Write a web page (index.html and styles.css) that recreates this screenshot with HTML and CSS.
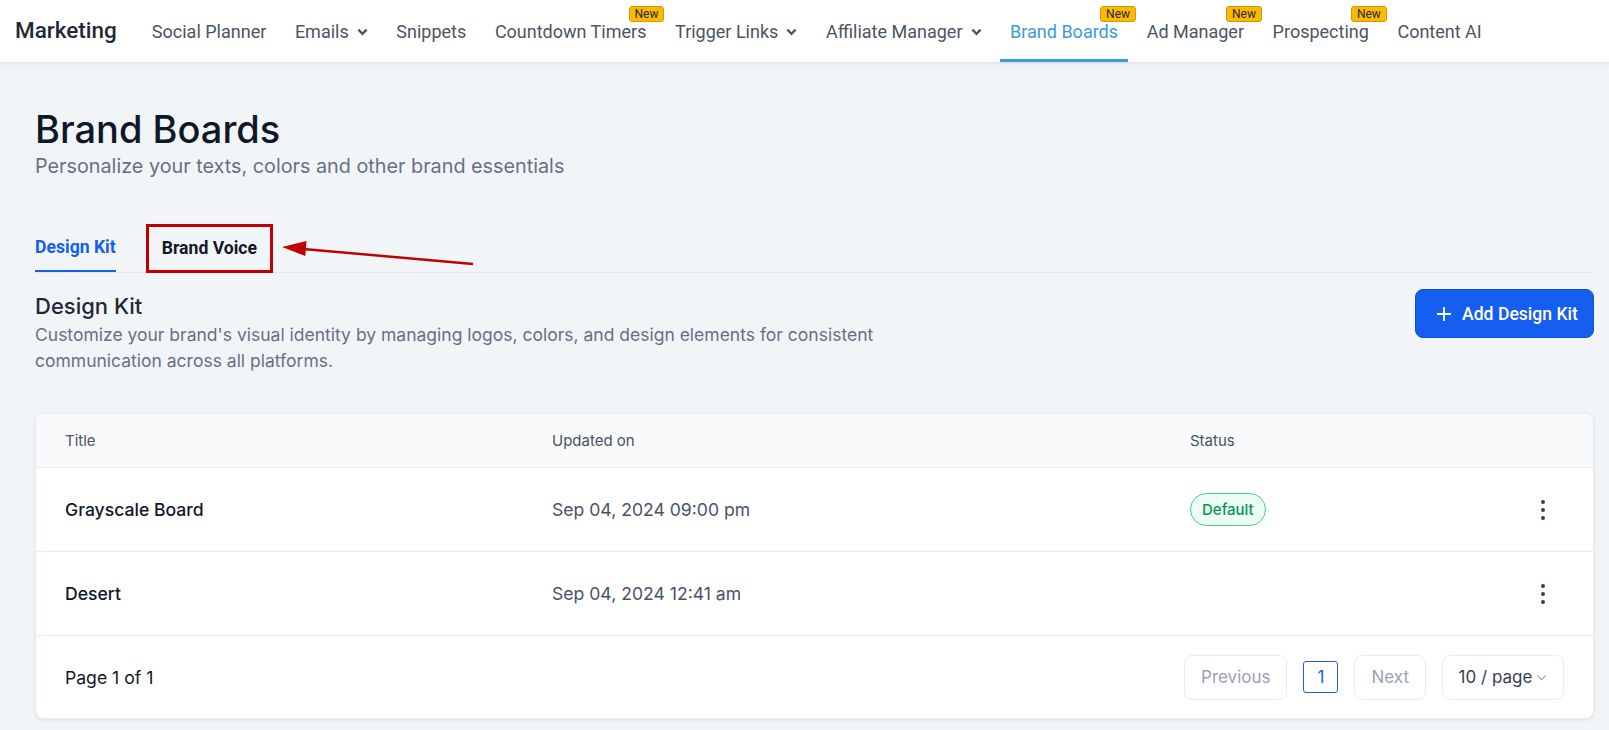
FILE: index.html
```html
<!DOCTYPE html>
<html lang="en">
<head>
<meta charset="utf-8">
<title>Brand Boards</title>
<link rel="stylesheet" href="styles.css">
</head>
<body>
<header class="topbar">
  <div class="brand">Marketing</div>
  <nav class="nav">
    <a class="nav-item">Social Planner</a>
    <a class="nav-item">Emails <svg class="chev" viewBox="0 0 12 8"><path d="M1.5 1.5 6 6l4.5-4.5"/></svg></a>
    <a class="nav-item">Snippets</a>
    <a class="nav-item">Countdown Timers<span class="new">New</span></a>
    <a class="nav-item">Trigger Links <svg class="chev" viewBox="0 0 12 8"><path d="M1.5 1.5 6 6l4.5-4.5"/></svg></a>
    <a class="nav-item">Affiliate Manager <svg class="chev" viewBox="0 0 12 8"><path d="M1.5 1.5 6 6l4.5-4.5"/></svg></a>
    <a class="nav-item active">Brand Boards<span class="new">New</span></a>
    <a class="nav-item">Ad Manager<span class="new">New</span></a>
    <a class="nav-item">Prospecting<span class="new">New</span></a>
    <a class="nav-item">Content AI</a>
  </nav>
</header>

<main class="page">
  <h1 class="title">Brand Boards</h1>
  <p class="subtitle">Personalize your texts, colors and other brand essentials</p>

  <div class="tabs">
    <div class="tab active">Design Kit</div>
    <div class="tab marked">Brand Voice</div>
    <svg class="arrow" width="450" height="50" viewBox="0 0 450 50">
      <line x1="268" y1="24.9" x2="438" y2="40" stroke="#c00000" stroke-width="2.5"/>
      <polygon points="247,23 271.5,17 270.3,32" fill="#c00000"/>
    </svg>
  </div>

  <section class="section-head">
    <div class="section-text">
      <h2 class="section-title">Design Kit</h2>
      <p class="section-desc">Customize your brand's visual identity by managing logos, colors, and design elements for consistent communication across all platforms.</p>
    </div>
    <button class="btn-primary">
      <svg class="plus" viewBox="0 0 14 14"><path d="M7 0v14M0 7h14"/></svg>
      Add Design Kit
    </button>
  </section>

  <div class="card">
    <div class="row head">
      <div>Title</div>
      <div>Updated on</div>
      <div>Status</div>
      <div></div>
    </div>
    <div class="row">
      <div class="name">Grayscale Board</div>
      <div class="date">Sep 04, 2024 09:00 pm</div>
      <div><span class="pill">Default</span></div>
      <div class="kebab"><span></span><span></span><span></span></div>
    </div>
    <div class="row">
      <div class="name">Desert</div>
      <div class="date">Sep 04, 2024 12:41 am</div>
      <div></div>
      <div class="kebab"><span></span><span></span><span></span></div>
    </div>
    <div class="footer">
      <div class="page-info">Page 1 of 1</div>
      <div class="pager">
        <button class="pg-btn">Previous</button>
        <button class="pg-num">1</button>
        <button class="pg-btn">Next</button>
        <button class="pg-size">10 / page <svg class="small-chev" viewBox="0 0 12 8"><path d="M1 1.5 6 6.5l5-5"/></svg></button>
      </div>
    </div>
  </div>
</main>
</body>
</html>
```
FILE: styles.css
```css
* { box-sizing: border-box; }
html, body { margin: 0; padding: 0; }
body {
  background: #f2f5f8;
  font-family: "Inter", "Roboto", sans-serif;
  color: #101828;
  width: 1609px;
  height: 730px;
  overflow: hidden;
}

/* Top bar */
.topbar {
  height: 62px;
  background: #ffffff;
  display: flex;
  align-items: stretch;
  padding-left: 15px;
  box-shadow: 0 1px 4px rgba(16, 24, 40, 0.12);
  position: relative;
  z-index: 2;
}
.brand {
  font-family: "Roboto", sans-serif;
  font-size: 22.5px;
  font-weight: 500;
  color: #1f2937;
  display: flex;
  align-items: center;
  margin-right: 25px;
  padding-bottom: 3px;
}
.nav {
  display: flex;
  gap: 8.6px;
  align-items: stretch;
}
.nav-item {
  font-family: "Roboto", sans-serif;
  font-size: 18px;
  color: #4b5563;
  padding: 0 10px;
  display: flex;
  align-items: center;
  gap: 8px;
  position: relative;
  border-bottom: 3px solid transparent;
  padding-top: 4px;
}
.nav-item.active {
  color: #3a9bdc;
  border-bottom-color: #3a9bdc;
}
.chev {
  width: 11px;
  height: 8px;
  fill: none;
  stroke: #4b5563;
  stroke-width: 2.6;
}
.new {
  position: absolute;
  top: 6px;
  right: -8px;
  background: #fcb900;
  border: 1px solid #d19a00;
  border-radius: 3px;
  font-family: "Roboto", sans-serif;
  font-size: 12px;
  line-height: 14px;
  color: #1f2937;
  padding: 0 5px;
}

/* Page */
.page {
  padding: 44px 15px 0 35px;
}
.title {
  margin: 0;
  font-size: 38px;
  line-height: 46px;
  font-weight: 500;
  color: #101828;
}
.subtitle {
  margin: 0;
  font-size: 19.8px;
  line-height: 28px;
  color: #667085;
}

.tabs {
  margin-top: 44px;
  display: flex;
  gap: 30px;
  border-bottom: 1px solid #e4e7ec;
  position: relative;
  height: 49px;
}
.tab {
  font-family: "Roboto", sans-serif;
  font-size: 17.6px;
  font-weight: 700;
  line-height: 24px;
  color: #101828;
}
.tab.active {
  color: #155eef;
  padding: 11px 0 12px;
  border-bottom: 2px solid #155eef;
}
.tab.marked {
  border: 3px solid #c00000;
  padding: 9px 13px 10px;
  height: 49px;
}
.arrow {
  position: absolute;
  left: 0;
  top: 0;
  overflow: visible;
}

.section-head {
  display: flex;
  justify-content: space-between;
  align-items: flex-start;
  margin-top: 15px;
}
.section-text { max-width: 900px; }
.section-title {
  margin: 3px 0 0;
  font-size: 22px;
  line-height: 30px;
  font-weight: 500;
  color: #1d2939;
}
.section-desc {
  margin: 1px 0 0;
  font-size: 17.5px;
  line-height: 26px;
  color: #667085;
}
.btn-primary {
  width: 179px;
  height: 49px;
  background: #155eef;
  border: 1px solid #0e4fd6;
  border-radius: 8px;
  color: #ffffff;
  font-family: "Roboto", sans-serif;
  font-size: 17.6px;
  font-weight: 500;
  display: flex;
  align-items: center;
  justify-content: center;
  gap: 11px;
  padding: 0 0 0 6px;
  margin-top: 1px;
}
.plus {
  width: 14px;
  height: 14px;
  stroke: #ffffff;
  stroke-width: 1.8;
}

/* Card/table */
.card {
  margin-top: 39px;
  background: #ffffff;
  border: 1px solid #eaecf0;
  border-radius: 8px;
  box-shadow: 0 1px 3px rgba(16, 24, 40, 0.1);
  overflow: hidden;
}
.row {
  display: grid;
  grid-template-columns: 487px 638px 1fr 40px;
  align-items: center;
  padding: 0 30px 0 29px;
  height: 84px;
  border-bottom: 1px solid #eaecf0;
}
.row.head {
  height: 54px;
  background: #f9fafb;
  font-size: 15px;
  color: #475467;
}
.name {
  font-size: 17.6px;
  font-weight: 500;
  color: #101828;
}
.date {
  font-size: 17.6px;
  color: #475467;
}
.pill {
  display: inline-flex;
  align-items: center;
  height: 33px;
  padding: 0 11px;
  border: 1px solid #47cd89;
  background: #ecfdf3;
  border-radius: 17px;
  font-size: 15px;
  font-weight: 500;
  color: #079455;
}
.kebab {
  display: flex;
  flex-direction: column;
  align-items: center;
  gap: 4px;
}
.kebab span {
  width: 4px;
  height: 4px;
  border-radius: 50%;
  background: #344054;
}
.footer {
  display: flex;
  justify-content: space-between;
  align-items: center;
  height: 82px;
  padding: 0 29px;
}
.page-info {
  font-size: 17.6px;
  color: #101828;
}
.pager {
  display: flex;
  align-items: center;
  gap: 16px;
}
.pager button {
  font-family: "Inter", sans-serif;
  font-size: 17px;
  background: #ffffff;
  padding: 0;
}
.pg-btn {
  height: 45px;
  padding: 0 16px !important;
  border: 1px solid #eaecf0;
  border-radius: 8px;
  color: #98a2b3;
}
.pg-num {
  width: 35px;
  height: 32px;
  border: 1px solid #155eef;
  border-radius: 3px;
  color: #155eef;
}
.pg-size {
  height: 45px;
  width: 122px;
  border: 1px solid #eaecf0;
  border-radius: 8px;
  color: #344054;
  display: flex;
  align-items: center;
  justify-content: center;
  gap: 4px;
}
.small-chev {
  width: 11px;
  height: 7px;
  fill: none;
  stroke: #98a2b3;
  stroke-width: 1.2;
}
```
